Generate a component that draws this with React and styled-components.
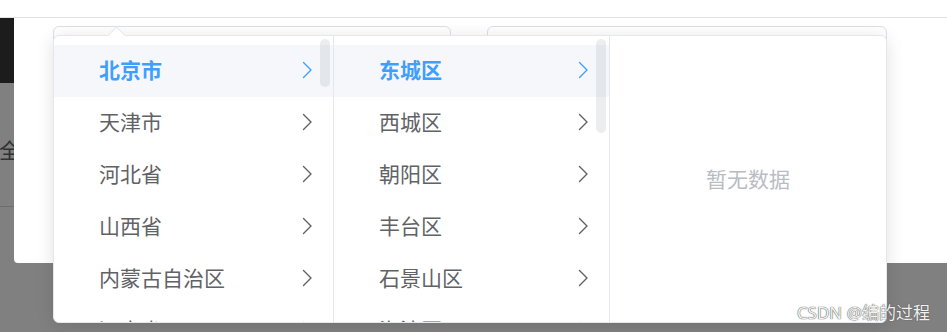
import React from "react";
import styled, { createGlobalStyle } from "styled-components";

const GlobalStyle = createGlobalStyle`
  html, body { margin: 0; padding: 0; }
  body {
    background: #808080;
    font-family: "Noto Sans CJK SC", "Noto Sans", sans-serif;
    overflow: hidden;
  }
`;

const Page = styled.div`
  position: relative;
  width: 947px;
  height: 332px;
  overflow: hidden;
  background: #808080;
`;

const TopBar = styled.div`
  height: 17px;
  background: #ffffff;
  border-bottom: 1px solid #e2e2e4;
`;

const Stage = styled.div`
  display: flex;
  align-items: flex-start;
`;

const LeftStrip = styled.div`
  width: 14px;
  display: flex;
  flex-direction: column;
  overflow: hidden;
`;

const DarkBlock = styled.div`
  height: 65px;
  background: #1c1c1c;
`;

const StripCell = styled.div`
  height: 124px;
  border-bottom: 1px solid #6e6e6e;
  display: flex;
  align-items: center;
  padding-top: 8px;
  box-sizing: border-box;
  color: #303133;
  font-size: 21px;
  margin-left: -1px;
  white-space: nowrap;
`;

const Dialog = styled.div`
  flex: 1;
  height: 245px;
  background: #ffffff;
  border-radius: 0 0 0 4px;
`;

const FormRow = styled.div`
  display: flex;
  gap: 36px;
  padding: 8px 0 0 39px;
`;

const FakeInput = styled.div`
  width: ${(p) => p.$w}px;
  height: 60px;
  box-sizing: border-box;
  border: 1px solid #dcdfe6;
  border-radius: 6px;
  background: #ffffff;
`;

const Dropdown = styled.div`
  position: absolute;
  left: 53px;
  top: 35px;
  width: 834px;
  height: 288px;
  box-sizing: border-box;
  background: #ffffff;
  border: 1px solid #e4e7ed;
  border-radius: 6px;
  box-shadow: 0 3px 18px rgba(0, 0, 0, 0.12);
  display: flex;

  &::before {
    content: "";
    position: absolute;
    left: 56px;
    top: -7px;
    width: 12px;
    height: 12px;
    background: #ffffff;
    border-top: 1px solid #e4e7ed;
    border-left: 1px solid #e4e7ed;
    transform: rotate(45deg);
  }
`;

const Menu = styled.div`
  position: relative;
  width: ${(p) => p.$w}px;
  flex: ${(p) => (p.$grow ? 1 : "none")};
  border-right: ${(p) => (p.$last ? "none" : "1px solid #e4e7ed")};
  overflow: hidden;
  display: flex;
  flex-direction: column;
  padding-top: 9px;
  box-sizing: border-box;
`;

const Node = styled.div`
  height: 52px;
  flex: none;
  display: flex;
  align-items: center;
  justify-content: space-between;
  padding: 0 20px 0 45px;
  background: ${(p) => (p.$active ? "#f5f7fa" : "transparent")};
  color: ${(p) => (p.$active ? "#409eff" : "#606266")};
  font-weight: ${(p) => (p.$active ? 700 : 400)};
  font-size: 21px;
`;

const Label = styled.span`
  line-height: 1;
  margin-top: -4px;
`;

const ArrowBox = styled.span`
  display: flex;
  margin-top: -3px;
`;

const Scrollbar = styled.div`
  position: absolute;
  right: 3px;
  top: 3px;
  width: 10px;
  height: ${(p) => p.$h}px;
  border-radius: 5px;
  background: rgba(144, 147, 153, 0.17);
`;

const Empty = styled.div`
  flex: 1;
  display: flex;
  align-items: center;
  justify-content: center;
  color: #b9bcc3;
  font-size: 21px;
  padding-bottom: 12px;
`;

const Watermark = styled.div`
  position: absolute;
  right: 17px;
  bottom: 8px;
  font-family: "Noto Sans", "Noto Sans CJK SC", sans-serif;
  font-size: 17px;
  color: #f2f2f2;
  text-shadow: 0 0 1px #555, 0 0 1px #555;
  white-space: nowrap;
`;

const Chevron = ({ color }) => (
  <svg width="11" height="18" viewBox="0 0 11 18" fill="none">
    <polyline
      points="1.5,1.5 9,9 1.5,16.5"
      stroke={color}
      strokeWidth="1.4"
      strokeLinecap="round"
      strokeLinejoin="round"
    />
  </svg>
);

const provinces = ["北京市", "天津市", "河北省", "山西省", "内蒙古自治区", "辽宁省"];
const districts = ["东城区", "西城区", "朝阳区", "丰台区", "石景山区", "海淀区"];

const MenuColumn = ({ items, width, barH }) => (
  <Menu $w={width}>
    {items.map((t, i) => (
      <Node key={t} $active={i === 0}>
        <Label>{t}</Label>
        <ArrowBox>
          <Chevron color={i === 0 ? "#409eff" : "#606266"} />
        </ArrowBox>
      </Node>
    ))}
    <Scrollbar $h={barH} />
  </Menu>
);

export default function App() {
  return (
    <Page>
      <GlobalStyle />
      <TopBar />
      <Stage>
        <LeftStrip>
          <DarkBlock />
          <StripCell>全部</StripCell>
        </LeftStrip>
        <Dialog>
          <FormRow>
            <FakeInput $w={398} />
            <FakeInput $w={400} />
          </FormRow>
        </Dialog>
      </Stage>
      <Dropdown>
        <MenuColumn items={provinces} width={280} barH={48} />
        <MenuColumn items={districts} width={276} barH={94} />
        <Menu $grow $last>
          <Empty>暂无数据</Empty>
        </Menu>
      </Dropdown>
      <Watermark>CSDN @编的过程</Watermark>
    </Page>
  );
}
